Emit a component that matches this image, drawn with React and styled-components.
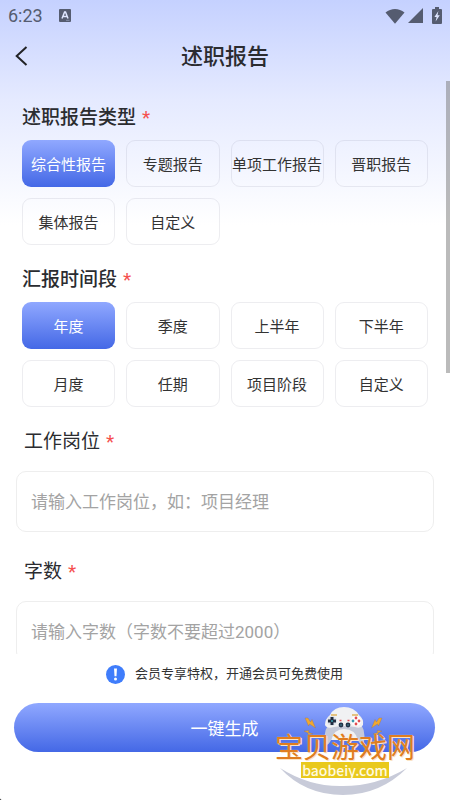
import React, { useState } from "react";
import styled, { createGlobalStyle, css } from "styled-components";

const GlobalStyle = createGlobalStyle`
  * {
    box-sizing: border-box;
  }

  body {
    margin: 0;
    background: #333333;
    font-family: Roboto, "Noto Sans CJK SC", sans-serif;
    color: #2b2c30;
  }

  button,
  input {
    font-family: inherit;
  }
`;

const blueGradient = css`
  background: linear-gradient(180deg, #90a8ff 0%, #4468e6 100%);
`;

const Screen = styled.div`
  position: relative;
  display: flex;
  flex-direction: column;
  height: 100vh;
  overflow: hidden;
  border-bottom-left-radius: 3px;
  background: linear-gradient(180deg, #c5d1ff 0px, #e5eaff 100px, #ffffff 225px);
`;

const StatusBar = styled.div`
  flex: none;
  display: flex;
  align-items: center;
  justify-content: space-between;
  height: 31px;
  padding: 0 8px;
  color: #555c70;
`;

const StatusGroup = styled.div`
  display: flex;
  align-items: center;
  gap: ${(props) => props.$gap}px;
`;

const Clock = styled.span`
  font-size: 18px;
  line-height: 31px;
`;

const NavBar = styled.header`
  flex: none;
  display: grid;
  grid-template-columns: 44px 1fr 44px;
  align-items: center;
  height: 50px;
`;

const BackButton = styled.button`
  display: flex;
  align-items: center;
  height: 44px;
  padding: 0 0 0 14px;
  border: 0;
  background: none;
  color: #222326;
`;

const Title = styled.h1`
  margin: 0;
  padding-top: 2px;
  font-size: 22px;
  font-weight: 500;
  line-height: 32px;
  text-align: center;
`;

const Body = styled.main`
  position: relative;
  flex: 1;
  min-height: 0;
  overflow: hidden;
`;

const ScrollArea = styled.div`
  display: flex;
  flex-direction: column;
  gap: 22px;
  height: 100%;
  padding: 24px 16px 0;
  overflow-y: auto;
  scrollbar-width: none;
`;

const ScrollThumb = styled.div`
  position: absolute;
  top: 0;
  right: 0;
  width: 4px;
  height: 51%;
  background: rgba(120, 120, 120, 0.5);
`;

const Section = styled.section`
  display: flex;
  flex-direction: column;
  gap: 9px;
  padding: 0 6px;
`;

const Heading = styled.h2`
  display: flex;
  gap: 6px;
  margin: 0;
  font-size: 19px;
  font-weight: 500;
  line-height: 26px;
`;

const Required = styled.span`
  font-size: 19px;
  font-weight: 400;
  color: #f5504e;
`;

const ChipGrid = styled.div`
  display: grid;
  grid-template-columns: repeat(4, minmax(0, 1fr));
  gap: 11px;
`;

const Chip = styled.button`
  display: flex;
  align-items: center;
  justify-content: center;
  height: 47px;
  padding: 0;
  border: 1px solid rgba(50, 60, 90, 0.09);
  border-radius: 9px;
  background: transparent;
  font-size: 15px;
  color: #333333;
  white-space: nowrap;

  ${(props) =>
    props.$active &&
    css`
      ${blueGradient}
      border: 0;
      color: #ffffff;
    `}
`;

const Field = styled.div`
  display: flex;
  flex-direction: column;
  gap: 16px;
  padding-bottom: 5px;
`;

const FieldLabel = styled.label`
  display: flex;
  gap: 6px;
  padding-left: 8px;
  font-size: 19px;
  line-height: 26px;
`;

const TextInput = styled.input`
  width: 100%;
  height: 61px;
  padding: 0 14px;
  border: 1px solid #eeeeee;
  border-radius: 10px;
  outline: none;
  background: #ffffff;
  font-size: 17px;
  color: #2b2c30;

  &::placeholder {
    color: #a3a3a3;
    opacity: 1;
  }
`;

const Footer = styled.footer`
  flex: none;
  padding: 9px 15px 48px 14px;
  background: #ffffff;
`;

const Notice = styled.p`
  display: flex;
  align-items: center;
  justify-content: center;
  gap: 10px;
  margin: 0 0 18px;
  font-size: 13px;
  line-height: 22px;
  color: #333333;
`;

const SubmitButton = styled.button`
  ${blueGradient}
  display: block;
  width: 100%;
  height: 49px;
  border: 0;
  border-radius: 25px;
  font-size: 17px;
  color: #ffffff;
`;

const Watermark = styled.div`
  position: absolute;
  right: 35px;
  bottom: 4px;
  display: flex;
  flex-direction: column;
  align-items: center;
  width: 140px;
  height: 90px;
  padding-top: 30px;
  pointer-events: none;
`;

const WatermarkArt = styled.svg`
  position: absolute;
  top: 0;
  left: 0;
`;

const WatermarkName = styled.span`
  position: relative;
  z-index: 1;
  font-size: 28px;
  line-height: 26px;
  color: #e07d20;
  white-space: nowrap;
  text-shadow: 0 0 1px #fff2dd, 1px 1px 0 #fbe3c4;
`;

const WatermarkSite = styled.span`
  position: relative;
  padding: 0 1px;
  background: #e9c91d;
  font-family: "Noto Sans CJK SC", sans-serif;
  font-size: 14px;
  font-weight: 500;
  line-height: 16px;
  color: #fffbe0;
`;

const reportTypes = ["综合性报告", "专题报告", "单项工作报告", "晋职报告", "集体报告", "自定义"];
const periods = ["年度", "季度", "上半年", "下半年", "月度", "任期", "项目阶段", "自定义"];

const KeyboardIcon = () => (
  <svg width="12" height="13" viewBox="0 0 12 13" aria-hidden="true">
    <rect width="12" height="13" rx="1" fill="#555c70" />
    <path d="M3 9.5L5.6 3h.9L9 9.5M4 7.5h4" fill="none" stroke="#dfe6ff" strokeWidth="1.5" />
    <path d="M7 11.3h3.5" stroke="#aab4d4" strokeWidth="0.6" />
  </svg>
);

const WifiIcon = () => (
  <svg width="20" height="16" viewBox="0 0 20 16" aria-hidden="true">
    <path d="M0.5 4.5C6 -0.3 14 -0.3 19.5 4.5L10 15.8Z" fill="currentColor" />
  </svg>
);

const SignalIcon = () => (
  <svg width="15" height="15" viewBox="0 0 15 15" aria-hidden="true">
    <path d="M15 0V15H0Z" fill="currentColor" />
  </svg>
);

const BatteryIcon = () => (
  <svg width="10" height="17" viewBox="0 0 10 17" aria-hidden="true">
    <path d="M3 0h4v2h2q1 0 1 1v13q0 1-1 1H1q-1 0-1-1V3q0-1 1-1h2z" fill="currentColor" />
    <path d="M6.4 4L2.4 10h2.2L3.6 14.4L7.8 8.2H5.5z" fill="#dfe6ff" />
  </svg>
);

const BackIcon = () => (
  <svg width="14" height="20" viewBox="0 0 14 20" aria-hidden="true">
    <path d="M12.5 1L2.7 10L12.5 19" fill="none" stroke="currentColor" strokeWidth="2" />
  </svg>
);

const AlertIcon = () => (
  <svg width="19" height="19" viewBox="0 0 19 19" aria-hidden="true">
    <circle cx="9.5" cy="9.5" r="9.5" fill="#3f7dfb" />
    <path d="M8 3.6h3l-.5 7.6h-2z" fill="#ffffff" />
    <circle cx="9.5" cy="14" r="1.5" fill="#ffffff" />
  </svg>
);

// game controller, sparks and the grey crescent under the name
const GamepadArt = () => (
  <WatermarkArt width="140" height="90" viewBox="0 0 140 90" aria-hidden="true">
    <path d="M5 62Q35 81 68 80Q102 80 132 62Q105 89 68 89Q30 89 5 62Z" fill="#c8cbd9" />
    <path d="M50 36Q48 22 56 17H84Q91 22 89 36Q87 42 84 36Q79 25 69 25Q59 25 55 36Q51 42 50 36Z" fill="#c5c9d9" />
    <path d="M55 9Q59 1 69 1Q79 1 84 9Q89 13 88 19Q86 23 80 21Q69 19 59 21Q52 23 50 19Q50 13 55 9Z" fill="#f1f1f3" />
    <path d="M56 34Q59 23 69 23Q80 23 83 34Z" fill="#f1f1f3" />
    <path d="M56 9h6M77 9h6" stroke="#e0b35c" strokeWidth="1.6" />
    <circle cx="57" cy="15" r="5" fill="#dfe2ea" />
    <path d="M57 11v8M53 15h8" stroke="#1f2b40" strokeWidth="3" />
    <circle cx="57" cy="15" r="1" fill="#3ca5b5" />
    <circle cx="81" cy="15" r="5" fill="#ffffff" />
    <circle cx="81" cy="12" r="1.4" fill="#e34b50" />
    <circle cx="81" cy="18" r="1.4" fill="#e34b50" />
    <circle cx="78" cy="15" r="1.4" fill="#3d97ad" />
    <circle cx="84" cy="15" r="1.4" fill="#e34b50" />
    <circle cx="66" cy="19" r="2.4" fill="#223148" />
    <circle cx="73" cy="19" r="2.4" fill="#223148" />
    <circle cx="66" cy="19" r="0.7" fill="#50a4b4" />
    <circle cx="73" cy="19" r="0.7" fill="#50a4b4" />
    <path d="M64.5 14.5h2M72.5 14.5h2" stroke="#e34b50" strokeWidth="1.4" />
    <g fill="#f0a830" stroke="#8f6a52" strokeWidth="0.3">
      <path d="M30 12L33 12L35.500 16L37 13.500L40.500 22L34.500 18L33.500 20Z" />
      <path d="M107 12L104 12L101.500 16L100 13.500L96.500 22L102.500 18L103.500 20Z" />
      <path d="M29 25L34 24.500L33.500 26.500L38 28L33 28.500L33 27Z" />
      <path d="M107 25L102 24.500L102.500 26.500L98 28L103 28.500L103 27Z" />
    </g>
  </WatermarkArt>
);

const ChipSection = ({ title, options }) => {
  const [selected, setSelected] = useState(0);

  return (
    <Section>
      <Heading>
        {title}
        <Required>*</Required>
      </Heading>
      <ChipGrid>
        {options.map((option, index) => (
          <Chip
            key={option}
            type="button"
            $active={index === selected}
            aria-pressed={index === selected}
            onClick={() => setSelected(index)}
          >
            {option}
          </Chip>
        ))}
      </ChipGrid>
    </Section>
  );
};

const InputField = ({ id, label, placeholder }) => (
  <Field>
    <FieldLabel htmlFor={id}>
      {label}
      <Required>*</Required>
    </FieldLabel>
    <TextInput id={id} type="text" placeholder={placeholder} />
  </Field>
);

const App = () => {
  return (
    <>
      <GlobalStyle />
      <Screen>
        <StatusBar>
          <StatusGroup $gap={16}>
            <Clock>6:23</Clock>
            <KeyboardIcon />
          </StatusGroup>
          <StatusGroup $gap={9}>
            <StatusGroup $gap={3}>
              <WifiIcon />
              <SignalIcon />
            </StatusGroup>
            <BatteryIcon />
          </StatusGroup>
        </StatusBar>
        <NavBar>
          <BackButton type="button" aria-label="返回">
            <BackIcon />
          </BackButton>
          <Title>述职报告</Title>
        </NavBar>
        <Body>
          <ScrollArea>
            <ChipSection title="述职报告类型" options={reportTypes} />
            <ChipSection title="汇报时间段" options={periods} />
            <InputField id="job" label="工作岗位" placeholder="请输入工作岗位，如：项目经理" />
            <InputField id="words" label="字数" placeholder="请输入字数（字数不要超过2000）" />
          </ScrollArea>
          <ScrollThumb />
        </Body>
        <Footer>
          <Notice>
            <AlertIcon />
            会员专享特权，开通会员可免费使用
          </Notice>
          <SubmitButton type="button">一键生成</SubmitButton>
        </Footer>
        <Watermark>
          <GamepadArt />
          <WatermarkName>宝贝游戏网</WatermarkName>
          <WatermarkSite>baobeiy.com</WatermarkSite>
        </Watermark>
      </Screen>
    </>
  );
};

export default App;
